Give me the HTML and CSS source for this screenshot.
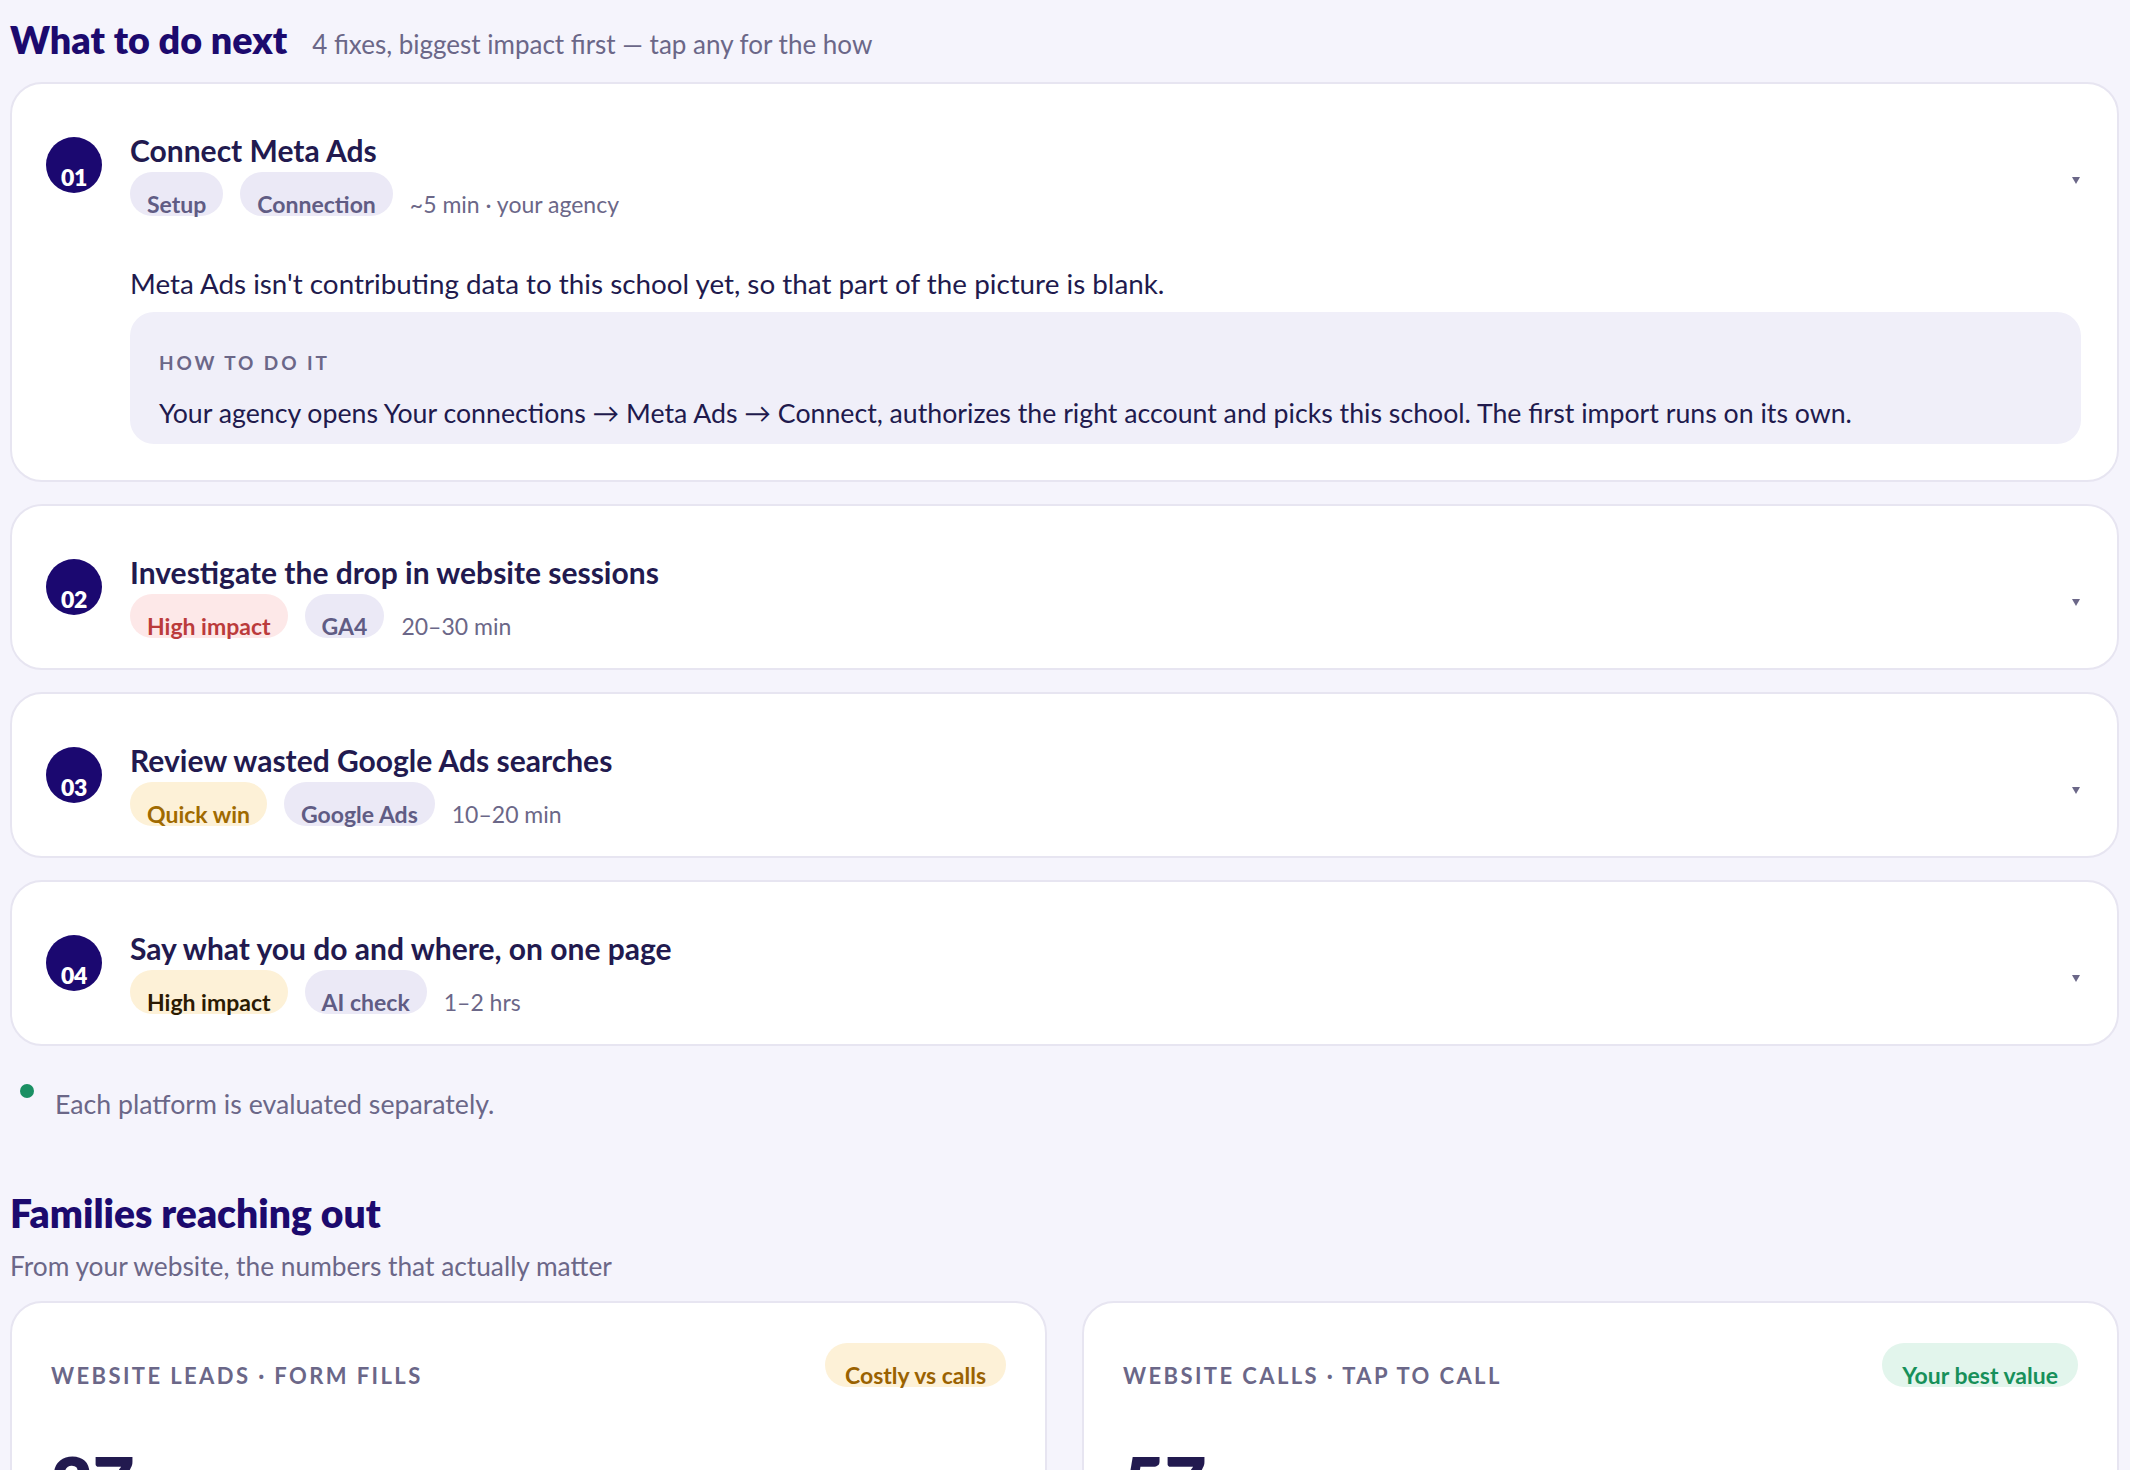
FILE: index.html
```html
<!DOCTYPE html>
<html lang="en">
<head>
<meta charset="utf-8">
<title>What to do next</title>
<link rel="stylesheet" href="styles.css">
</head>
<body>
<main class="page">
  <section class="next">
    <div class="section-head">
      <h2 class="section-title section-title-next">What to do next</h2>
      <span class="section-sub">4 fixes, biggest impact first — tap any for the how</span>
    </div>

    <div class="fix-list">
      <article class="fix open">
        <div class="fix-head">
          <div class="fix-num">01</div>
          <div class="fix-main">
            <h3 class="fix-title">Connect Meta Ads</h3>
            <div class="fix-meta">
              <span class="pill pill-muted">Setup</span>
              <span class="pill pill-muted">Connection</span>
              <span class="fix-time">~5 min · your agency</span>
            </div>
          </div>
          <span class="chev"></span>
        </div>
        <div class="fix-body">
          <p class="fix-desc">Meta Ads isn't contributing data to this school yet, so that part of the picture is blank.</p>
          <div class="howto">
            <div class="howto-label">How to do it</div>
            <p class="howto-text">Your agency opens Your connections → Meta Ads → Connect, authorizes the right account and picks this school. The first import runs on its own.</p>
          </div>
        </div>
      </article>

      <article class="fix">
        <div class="fix-head">
          <div class="fix-num">02</div>
          <div class="fix-main">
            <h3 class="fix-title">Investigate the drop in website sessions</h3>
            <div class="fix-meta">
              <span class="pill pill-red">High impact</span>
              <span class="pill pill-muted">GA4</span>
              <span class="fix-time">20–30 min</span>
            </div>
          </div>
          <span class="chev"></span>
        </div>
      </article>

      <article class="fix">
        <div class="fix-head">
          <div class="fix-num">03</div>
          <div class="fix-main">
            <h3 class="fix-title">Review wasted Google Ads searches</h3>
            <div class="fix-meta">
              <span class="pill pill-amber">Quick win</span>
              <span class="pill pill-muted">Google Ads</span>
              <span class="fix-time">10–20 min</span>
            </div>
          </div>
          <span class="chev"></span>
        </div>
      </article>

      <article class="fix">
        <div class="fix-head">
          <div class="fix-num">04</div>
          <div class="fix-main">
            <h3 class="fix-title">Say what you do and where, on one page</h3>
            <div class="fix-meta">
              <span class="pill pill-amber-dark">High impact</span>
              <span class="pill pill-muted">AI check</span>
              <span class="fix-time">1–2 hrs</span>
            </div>
          </div>
          <span class="chev"></span>
        </div>
      </article>
    </div>

    <div class="note">
      <span class="note-dot"></span>
      <span class="note-text">Each platform is evaluated separately.</span>
    </div>
  </section>

  <section class="families">
    <h2 class="section-title">Families reaching out</h2>
    <p class="families-sub">From your website, the numbers that actually matter</p>

    <div class="stat-grid">
      <div class="stat-card">
        <div class="stat-head">
          <span class="stat-label">Website leads · Form fills</span>
          <span class="pill pill-costly">Costly vs calls</span>
        </div>
        <div class="stat-value">27</div>
        <div class="stat-caption">form fills this month</div>
      </div>
      <div class="stat-card">
        <div class="stat-head">
          <span class="stat-label">Website calls · Tap to call</span>
          <span class="pill pill-green">Your best value</span>
        </div>
        <div class="stat-value">57</div>
        <div class="stat-caption">calls this month</div>
      </div>
    </div>
  </section>
</main>
</body>
</html>
```

FILE: styles.css
```css
* { box-sizing: border-box; }

html, body {
  margin: 0;
  padding: 0;
  background: #f5f4fc;
}

body {
  font-family: "Lato", "Noto Sans", sans-serif;
  color: #211a4d;
  overflow: hidden;
}

.page {
  padding: 0 11px 0 10px;
}

/* ---------- section heading ---------- */
.section-head {
  display: flex;
  align-items: baseline;
  gap: 25px;
  padding-top: 16px;
  margin-bottom: 19px;
}

.section-title {
  margin: 0;
  font-size: 39px;
  line-height: 47px;
  font-weight: 800;
  letter-spacing: 0;
  color: #1c0a6e;
}

.section-title-next {
  font-size: 37.7px;
}

.section-sub {
  font-size: 26px;
  color: #6b6788;
}

/* ---------- fix cards ---------- */
.fix-list {
  display: flex;
  flex-direction: column;
  gap: 22px;
}

.fix {
  background: #ffffff;
  border: 2px solid #e7e5f1;
  border-radius: 32px;
}

.fix-head {
  display: flex;
  align-items: flex-start;
  padding: 51px 37px 28px 34px;
}

.fix-num {
  flex: none;
  width: 56px;
  height: 56px;
  margin-top: 2px;
  margin-right: 28px;
  border-radius: 50%;
  background: #1b0870;
  color: #ffffff;
  font-size: 23px;
  font-weight: 800;
  line-height: 23px;
  text-align: center;
  padding-top: 29px;
  letter-spacing: -0.3px;
}

.fix-main {
  flex: 1;
  min-width: 0;
}

.fix-title {
  margin: 0;
  font-size: 30px;
  line-height: 30px;
  font-weight: 700;
  color: #221a4f;
}

.fix-meta {
  display: flex;
  align-items: baseline;
  gap: 17px;
  margin-top: 7px;
}

.pill {
  display: inline-block;
  height: 44px;
  padding: 21px 17px 0;
  border-radius: 22px;
  font-size: 23px;
  line-height: 23px;
  font-weight: 700;
  white-space: nowrap;
}

.pill-muted { background: #ebe9f6; color: #605c84; }
.pill-red { background: #fde8e8; color: #bb3b3b; }
.pill-amber { background: #fdf1d7; color: #a06a00; }
.pill-amber-dark { background: #fdf1d7; color: #2b1a02; }
.pill-costly { background: #fdf1d7; color: #9a6200; padding-left: 20px; padding-right: 20px; }
.pill-green { background: #e2f5ec; color: #17905a; padding-left: 20px; padding-right: 20px; }

.fix-time {
  font-size: 23px;
  color: #6b6788;
}

.chev {
  flex: none;
  width: 0;
  height: 0;
  margin-top: 42px;
  border-left: 4px solid transparent;
  border-right: 4px solid transparent;
  border-top: 7px solid #6b6788;
}

.fix.open .fix-head {
  padding-bottom: 0;
}

.fix-body {
  padding: 0 36px 36px 118px;
}

.fix-desc {
  margin: 48px 0 10px;
  font-size: 27.8px;
  line-height: 36px;
  color: #211a4d;
}

.howto {
  background: #f0eff9;
  border-radius: 24px;
  padding: 41px 29px 13px;
}

.howto-label {
  font-size: 19px;
  line-height: 19px;
  font-weight: 700;
  letter-spacing: 2.9px;
  text-transform: uppercase;
  color: #6b6788;
}

.howto-text {
  margin: 23px 0 0;
  font-size: 26.7px;
  line-height: 36px;
  color: #211a4d;
}

/* ---------- note ---------- */
.note {
  display: flex;
  align-items: flex-start;
  gap: 21px;
  margin-top: 38px;
  padding-left: 10px;
}

.note-dot {
  flex: none;
  width: 14px;
  height: 14px;
  border-radius: 50%;
  background: #1a8f63;
}

.note-text {
  padding-top: 2px;
  font-size: 26.7px;
  line-height: 36px;
  color: #6b6788;
}

/* ---------- families ---------- */
.families {
  margin-top: 68px;
}

.families-sub {
  margin: 11px 0 17px;
  font-size: 26.3px;
  line-height: 36px;
  color: #6b6788;
}

.stat-grid {
  display: grid;
  grid-template-columns: 1fr 1fr;
  gap: 35px;
}

.stat-card {
  background: #ffffff;
  border: 2px solid #e7e5f1;
  border-radius: 32px;
  padding: 40px 39px 40px 39px;
}

.stat-head {
  display: flex;
  align-items: baseline;
  justify-content: space-between;
}

.stat-label {
  font-size: 22px;
  font-weight: 700;
  letter-spacing: 2.4px;
  text-transform: uppercase;
  color: #6b6788;
}

.stat-value {
  margin-top: 57px;
  font-size: 72px;
  line-height: 72px;
  font-weight: 800;
  color: #221a4f;
}

.stat-caption {
  margin-top: 10px;
  font-size: 22px;
  color: #6b6788;
}
```
